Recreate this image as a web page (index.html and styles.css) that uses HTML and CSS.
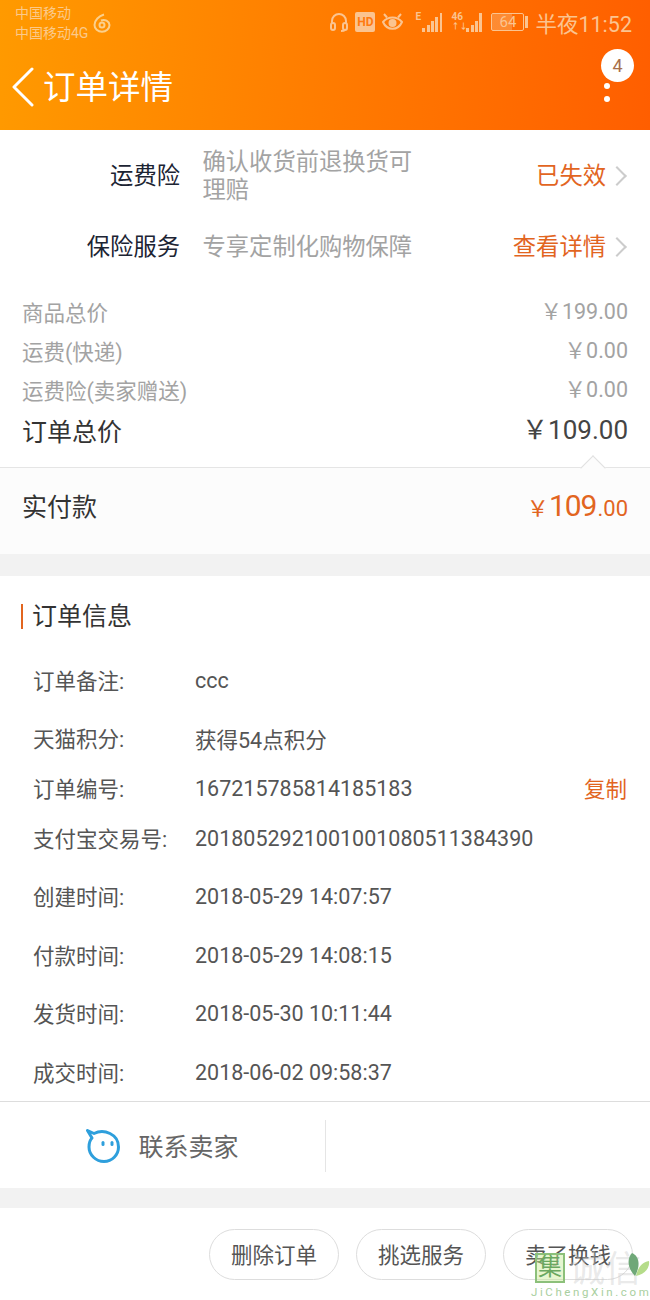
FILE: index.html
```html
<!DOCTYPE html>
<html lang="zh-CN">
<head>
  <meta charset="UTF-8" />
  <title>订单详情</title>
  <link rel="stylesheet" href="styles.css">
</head>
<body>
  <div class="page">
    <header class="top">
      <div class="status">
        <div class="carrier">
          <div>中国移动</div>
          <div>中国移动4G</div>
        </div>
        <svg class="music" width="18" height="20" viewBox="0 0 18 20" fill="none" stroke="#fbd08c" stroke-width="2">
          <path d="M11 1.5 C6 3 1.5 7 1.5 12 a7.5 6.8 0 0 0 15 0 a6 5.5 0 0 0 -8.5 -4.5" />
          <circle cx="9" cy="12" r="2.5" />
        </svg>
        <div class="status-right">
          <svg width="18" height="20" viewBox="0 0 18 20" fill="none" stroke="#fbc490" stroke-width="2">
            <path d="M2 12 V9 a7 7 0 0 1 14 0 V12" />
            <rect x="1" y="11" width="4" height="7" rx="2" />
            <rect x="13" y="11" width="4" height="7" rx="2" />
            <path d="M15 18 Q14 19 11 19" />
          </svg>
          <span class="hd">HD</span>
          <svg class="eye" width="21" height="18" viewBox="0 0 21 18" fill="none" stroke="#fbc490" stroke-width="2">
            <path d="M1 9 C6 3 15 3 20 9 C16 18 5 18 1 9 Z" />
            <circle cx="10.5" cy="10" r="3" fill="#fbc490" />
            <path d="M2 1 L5 4.5 M19 1 L16 4.5" />
          </svg>
          <div class="signal"><em>E</em><i class="b1"></i><i class="b2"></i><i class="b3"></i><i class="b4"></i><i class="b5"></i></div>
          <div class="signal sig2"><em>46</em><em class="arrows">↑↓</em><i class="b1"></i><i class="b2"></i><i class="b3"></i><i class="b5"></i></div>
          <div class="battery"><span>64</span></div>
          <span class="clock">半夜11:52</span>
        </div>
      </div>
      <div class="nav">
        <svg class="back" width="24" height="40" viewBox="0 0 24 40" fill="none" stroke="#fff" stroke-width="3" stroke-linecap="round" stroke-linejoin="round">
          <path d="M21 2 L3 20 L21 38" />
        </svg>
        <h1>订单详情</h1>
        <div class="more">
          <span class="badge">4</span>
          <i></i><i></i>
        </div>
      </div>
    </header>

    <section class="services">
      <div class="service">
        <div class="service-label">运费险</div>
        <div class="service-desc">确认收货前退换货可理赔</div>
        <div class="service-link">已失效<span class="chev"></span></div>
      </div>
      <div class="service">
        <div class="service-label">保险服务</div>
        <div class="service-desc">专享定制化购物保障</div>
        <div class="service-link">查看详情<span class="chev"></span></div>
      </div>
    </section>

    <section class="prices">
      <div class="price-row"><span>商品总价</span><span class="num">￥199.00</span></div>
      <div class="price-row"><span>运费(快递)</span><span class="num">￥0.00</span></div>
      <div class="price-row"><span>运费险(卖家赠送)</span><span class="num">￥0.00</span></div>
      <div class="price-total"><span>订单总价</span><span class="num">￥109.00</span></div>
    </section>

    <section class="paid">
      <span class="paid-label">实付款</span>
      <span class="paid-num"><small>￥</small><b>109</b><small>.00</small></span>
    </section>

    <section class="info">
      <h2>订单信息</h2>
      <div class="info-row r1"><span class="k">订单备注:</span><span class="v">ccc</span></div>
      <div class="info-row r2"><span class="k">天猫积分:</span><span class="v">获得54点积分</span></div>
      <div class="info-row r3"><span class="k">订单编号:</span><span class="v">167215785814185183</span><a class="copy">复制</a></div>
      <div class="info-row r4"><span class="k">支付宝交易号:</span><span class="v">2018052921001001080511384390</span></div>
      <div class="info-row r5"><span class="k">创建时间:</span><span class="v">2018-05-29 14:07:57</span></div>
      <div class="info-row r5"><span class="k">付款时间:</span><span class="v">2018-05-29 14:08:15</span></div>
      <div class="info-row r5"><span class="k">发货时间:</span><span class="v">2018-05-30 10:11:44</span></div>
      <div class="info-row r5"><span class="k">成交时间:</span><span class="v">2018-06-02 09:58:37</span></div>
    </section>

    <section class="contact">
      <div class="contact-cell">
        <svg width="34" height="34" viewBox="0 0 34 34" fill="none">
          <path d="M8 4.5 C18 -0.5 32.5 5 32.5 18 C32.5 26 26 32.5 18 32.5 C10 32.5 3 26 3 18 C3 14 4 11 6 9 L1.5 1.5 Z" stroke="#2e9fdc" stroke-width="3" stroke-linejoin="round" />
          <rect x="15.5" y="12" width="3" height="5" rx="1.5" fill="#2e9fdc" />
          <rect x="24.5" y="12" width="3" height="5" rx="1.5" fill="#2e9fdc" />
        </svg>
        <span>联系卖家</span>
      </div>
    </section>

    <section class="actions">
      <button>删除订单</button>
      <button>挑选服务</button>
      <button>卖了换钱</button>
    </section>

    <div class="watermark">
      <div class="wm-box">集</div>
      <div class="wm-text">诚信</div>
      <svg class="wm-leaf" width="24" height="30" viewBox="0 0 24 30">
        <path d="M8 24 C0 16 0 6 5 1 C12 4 14 13 8 24 Z" fill="#6fa878" />
        <path d="M9 24 C11 15 15 10 22 9 C23 16 18 22 9 24 Z" fill="#b5dc8a" />
      </svg>
      <div class="wm-url">JiChengXin.com</div>
    </div>
  </div>
</body>
</html>
```

FILE: styles.css
```css
* {
  box-sizing: border-box;
}

body {
  margin: 0;
  font-family: Roboto, "Noto Sans CJK SC", sans-serif;
  background: #fff;
}

.page {
  position: relative;
  width: 650px;
  height: 1300px;
  overflow: hidden;
}

/* header */
.top {
  height: 130px;
  background: linear-gradient(95deg, #ff9a00, #ff5e00);
  color: #fff;
}

.status {
  display: flex;
  height: 44px;
  padding: 3px 18px 0 15px;
}

.carrier {
  font-size: 14px;
  line-height: 20px;
  color: #fbc98a;
}

.music {
  margin: 10px 0 0 5px;
}

.status-right {
  display: flex;
  align-items: center;
  gap: 7px;
  margin-left: auto;
  height: 38px;
  color: #fbc490;
}

.hd {
  width: 20px;
  height: 20px;
  border-radius: 2px;
  background: #fbc490;
  color: #ff7a10;
  font-size: 12px;
  font-weight: 700;
  line-height: 20px;
  text-align: center;
}

.eye {
  margin-right: 5px;
}

.signal {
  position: relative;
  display: flex;
  align-items: flex-end;
  gap: 1.5px;
  width: 27px;
  height: 20px;
  padding-left: 7px;
}

.signal em {
  position: absolute;
  left: 0;
  top: 0;
  font-size: 10px;
  line-height: 10px;
  font-style: normal;
  font-weight: 700;
}

.signal em.arrows {
  top: 10px;
  font-size: 8px;
}

.sig2 {
  width: 31px;
  margin-left: 2px;
  padding-left: 15px;
}

.signal i {
  width: 2.8px;
  background: #fbc490;
}

.b1 { height: 4px; }
.b2 { height: 7px; }
.b3 { height: 11px; }
.b4 { height: 15px; }
.b5 { height: 19px; }

.battery {
  position: relative;
  width: 33px;
  height: 18px;
  margin-left: 2px;
  margin-right: 4px;
  border: 1px solid #fbc490;
  border-radius: 2px;
  background: linear-gradient(90deg, rgba(251, 196, 144, 0.35) 64%, transparent 64%);
  font-size: 15px;
  line-height: 16px;
  text-align: center;
}

.battery::after {
  content: "";
  position: absolute;
  right: -5px;
  top: 2px;
  width: 3px;
  height: 12px;
  background: #fbc490;
}

.clock {
  font-size: 21.5px;
}

.nav {
  position: relative;
  display: flex;
  align-items: center;
  height: 86px;
  padding: 2px 0 0 11px;
}

.back {
  margin-right: 8px;
  margin-top: -2px;
}

.nav h1 {
  margin: 0;
  font-size: 32.5px;
  font-weight: 400;
  line-height: 1;
}

.more i {
  position: absolute;
  left: 604px;
  width: 6px;
  height: 6px;
  border-radius: 50%;
  background: #fff;
}

.more i:nth-of-type(1) { top: 39px; }
.more i:nth-of-type(2) { top: 52px; }

.badge {
  position: absolute;
  left: 601px;
  top: 5px;
  width: 33px;
  height: 33px;
  border-radius: 50%;
  background: #fff;
  color: #a8704a;
  font-size: 18px;
  line-height: 33px;
  text-align: center;
}

/* insurance rows */
.services {
  padding-top: 18px;
}

.service {
  display: flex;
  align-items: center;
  padding-right: 23px;
  font-size: 23.3px;
  line-height: 28px;
}

.service + .service {
  margin-top: 29px;
}

.service-label {
  width: 180px;
  text-align: right;
  color: #1c2433;
}

.service-desc {
  width: 216px;
  margin-left: 22.5px;
  color: #a3a3a3;
}

.service-link {
  display: flex;
  align-items: center;
  margin-left: auto;
  color: #e2651f;
}

.chev {
  width: 14px;
  height: 14px;
  margin-left: 4px;
  margin-right: 3px;
  border-top: 2px solid #ccc;
  border-right: 2px solid #ccc;
  transform: rotate(45deg);
}

/* price list */
.prices {
  padding: 0 22px;
  margin-top: 33px;
}

.price-row {
  display: flex;
  justify-content: space-between;
  height: 39px;
  font-size: 21.5px;
  line-height: 39px;
  color: #a3a3a3;
}

.price-row .num {
  position: relative;
  top: -2px;
}

.price-total {
  display: flex;
  justify-content: space-between;
  margin-top: 3px;
  height: 37px;
  font-size: 25px;
  line-height: 37px;
  color: #333;
}

.price-total .num {
  position: relative;
  top: -2px;
  font-size: 26px;
  color: #444;
}

.paid {
  position: relative;
  display: flex;
  justify-content: space-between;
  align-items: center;
  height: 87px;
  margin-top: 16px;
  padding: 0 22px 12px;
  border-top: 1px solid #e5e5e5;
  background: #fcfcfc;
}

.paid::before {
  content: "";
  position: absolute;
  left: 584px;
  top: -9px;
  width: 17px;
  height: 17px;
  border-top: 1px solid #e0e0e0;
  border-left: 1px solid #e0e0e0;
  background: #fcfcfc;
  transform: rotate(45deg);
}

.paid-label {
  font-size: 25px;
  color: #333;
}

.paid-num {
  color: #e2651f;
}

.paid-num small {
  font-size: 22px;
}

.paid-num b {
  font-size: 30px;
  font-weight: 400;
  letter-spacing: -1px;
  margin-right: 1px;
}

/* order info */
.info {
  border-top: 22px solid #f2f2f2;
  padding-bottom: 15px;
  border-bottom: 1px solid #ddd;
}

.info h2 {
  margin: 28px 0 35px 21px;
  padding-left: 9px;
  border-left: 2px solid #e2651f;
  font-size: 25px;
  font-weight: 400;
  line-height: 25px;
  color: #333;
}

.info-row {
  display: flex;
  align-items: center;
  padding: 0 23px 0 33px;
  font-size: 21.5px;
  color: #555;
}

.k {
  width: 162px;
}

.v {
  position: relative;
  top: 1px;
}

.copy {
  margin-left: auto;
  color: #e2651f;
}

.r1 { height: 30px; }
.r2 { height: 30px; margin-top: 28px; }
.r3 { height: 30px; margin-top: 20px; }
.r4 { height: 30px; margin-top: 20px; }
.r5 { height: 30px; margin-top: 28.6px; }

/* contact */
.contact {
  height: 86px;
  padding-top: 18px;
}

.contact-cell {
  display: flex;
  align-items: center;
  justify-content: center;
  gap: 18px;
  width: 326px;
  height: 52px;
  border-right: 1px solid #e5e5e5;
  font-size: 25px;
  color: #666;
}

.contact-cell span {
  margin-bottom: 2px;
}

.actions {
  display: flex;
  justify-content: flex-end;
  gap: 17px;
  height: 111px;
  padding: 21px 17px 0 0;
  border-top: 20px solid #f2f2f2;
}

.actions button {
  width: 130px;
  height: 51px;
  padding: 0 0 3px;
  border: 1px solid #ddd;
  border-radius: 26px;
  background: #fff;
  font-family: inherit;
  font-size: 21.5px;
  color: #555;
}

/* site watermark over the corner */
.watermark {
  position: absolute;
  left: 533px;
  top: 1250px;
  width: 117px;
  height: 50px;
}

.wm-box {
  position: absolute;
  left: 2px;
  top: 3px;
  width: 30px;
  height: 30px;
  border: 2px solid #8cc07a;
  background: rgba(200, 235, 150, 0.45);
  color: #6ba860;
  font-size: 24px;
  line-height: 25px;
  text-align: center;
}

.wm-text {
  position: absolute;
  left: 36px;
  top: 1px;
  font-size: 36px;
  line-height: 38px;
  color: rgba(200, 200, 200, 0.4);
}

.wm-leaf {
  position: absolute;
  left: 94px;
  top: 2px;
}

.wm-url {
  position: absolute;
  left: -2px;
  top: 35px;
  font-size: 11.5px;
  letter-spacing: 2.6px;
  white-space: nowrap;
  color: #a9cfa0;
}
```
